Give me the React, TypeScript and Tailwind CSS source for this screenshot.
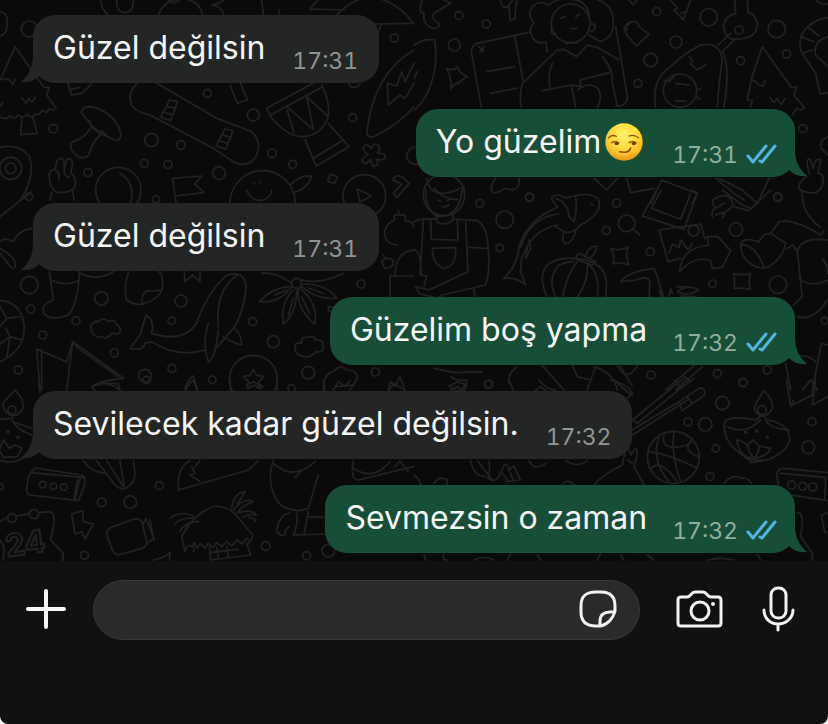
type Section = {
  x: number;
  y: number;
  circles: number[][];
  lines: string[];
};

type Message = {
  text: string;
  time: string;
  sent?: boolean;
  smirk?: boolean;
};

const messages: Message[] = [
  { text: "Güzel değilsin", time: "17:31" },
  { text: "Yo güzelim", time: "17:31", sent: true, smirk: true },
  { text: "Güzel değilsin", time: "17:31" },
  { text: "Güzelim boş yapma", time: "17:32", sent: true },
  { text: "Sevilecek kadar güzel değilsin.", time: "17:32" },
  { text: "Sevmezsin o zaman", time: "17:32", sent: true },
];

// Wallpaper doodles, drawn on a grid three times finer than the page
const sections: Section[] = [
  {
    x: 0,
    y: 0,
    circles: [
      [88, 87, 24], [1183, 114, 12], [160, 386, 13], [454, 420, 20], [543, 435, 13], [433, 490, 12],
      [504, 493, 12], [657, 519, 19], [264, 517, 12], [622, 280, 12], [760, 345, 18], [1058, 353, 12],
      [816, 460, 13], [878, 493, 12], [32, 505, 33], [32, 505, 16], [1247, 467, 26], [355, 570, 68],
      [788, 610, 98], [1093, 588, 64], [87, 590, 11], [468, 598, 11],
    ],
    lines: [
      "M302 0Q305 30 325 46M350 0Q348 38 375 38Q402 36 400 0M475 46Q490 0 545 -5Q600 0 608 46M505 0L520 10L540 0",
      "M635 15Q665 10 680 -8M635 15Q670 20 670 46M785 0L790 46M836 30L838 46M930 27L1035 30M930 27L960 -8M1010 46Q1050 0 1110 -10Q1190 0 1240 70L1120 72M1145 72L1132 100",
      "M0 35Q25 40 22 70Q20 105 0 108",
      "M45 140L2 238L26 238L38 254L46 238M45 140L105 225L132 262L148 262L140 285L168 325Q155 335 148 325Q140 345 128 330Q115 350 105 342Q95 360 82 342Q70 360 55 345Q45 362 30 347Q20 362 0 350",
      "M66 352L62 404L112 400L98 350M65 293L78 310L86 295L96 306L106 292M0 320L8 308",
      "M0 442Q60 430 88 470Q108 525 62 600",
      "M245 340Q240 320 275 320Q350 340 363 405Q358 430 340 418Q290 400 262 360ZM268 362Q272 385 285 388L298 400L306 392L325 412M270 385Q255 415 218 425Q200 445 235 470Q265 480 270 455Q280 420 302 405",
      "M203 250L215 285L245 280L275 252M207 270L238 262",
      "M410 252Q380 280 395 315Q405 335 450 345L640 445L700 485Q740 505 765 475Q790 430 755 395L650 355L470 250",
      "M508 300L532 305L526 325L500 318ZM500 320L490 335L518 345L526 325M490 335L482 352L512 362L518 345M674 387L698 392L692 412L666 405ZM666 405L656 422L684 430L692 412M656 422L648 438L678 448L684 430",
      "M800 325L940 250M812 345L965 262M800 325L812 350Q860 410 910 410Q965 405 985 350Q990 300 965 255M862 332L882 398M862 322L940 388M940 388L920 290L985 350",
      "M915 418L948 498L1047 440L985 370M940 475L1030 420M690 255L712 310L742 300L722 250",
      "M1242 150Q1120 220 1100 400Q1110 420 1130 405Q1200 370 1242 320M1165 315L1162 250L1190 258L1205 215L1215 245L1242 190M1165 315L1200 285L1215 295L1242 250M1045 250Q1060 275 1080 252",
      "M1090 440Q1100 428 1115 445Q1118 428 1135 435Q1145 445 1132 460Q1160 458 1155 475Q1145 482 1130 478Q1140 498 1122 500Q1112 490 1112 478Q1095 500 1086 482Q1090 470 1104 464Q1088 455 1090 440Z",
      "M148 530Q145 510 165 508L172 482Q185 465 192 485L193 505L200 480Q215 470 218 490L212 520Q230 530 225 560Q215 578 180 578Q150 575 148 530M155 578L150 600M218 572L222 600M166 510Q182 518 176 540M193 505Q190 530 208 532",
      "M360 520Q408 550 392 610M518 535L605 528L585 552L612 578L525 588M518 535L528 610",
      "M740 570Q750 600 782 602Q812 595 815 570M762 548L763 552M781 545L782 549M870 555Q910 520 935 530Q920 570 880 578",
      "M1072 568L1115 588L1080 606ZM990 522L1012 530L1005 550L983 545ZM1178 540Q1185 522 1205 530L1228 550L1190 592L1180 580L1205 552Z",
    ],
  },
  {
    x: 414,
    y: 0,
    circles: [
      [121, 135, 18], [217, 72, 12], [135, 47, 12], [728, 35, 12], [884, 52, 26], [786, 126, 18],
      [710, 180, 20], [672, 250, 12], [980, 182, 12], [1088, 87, 26], [1118, 162, 12], [1167, 386, 12],
      [798, 272, 50], [975, 90, 12], [470, 70, 58], [90, 585, 62], [346, 592, 12], [1092, 592, 12],
    ],
    lines: [
      "M0 135Q30 115 62 120Q75 200 40 280Q20 315 0 332M0 235L10 215",
      "M25 0Q10 40 30 40Q25 75 55 85Q80 85 75 70Q50 60 60 40L110 10L90 0M260 0Q262 25 280 22L300 -5M285 20L288 60L302 58L308 0",
      "M98 205Q120 215 130 200Q135 218 160 230Q140 240 132 252Q125 245 110 266Q115 240 98 205Z",
      "M202 322L172 155Q172 135 190 130L345 97M302 108L328 245M218 215L302 200M230 280L312 264M195 140L208 155M210 140L198 156",
      "M400 155L395 125Q365 135 355 110Q340 85 360 70Q335 40 360 15Q380 0 405 15Q430 -8 470 -2Q520 0 525 45M530 70Q555 75 535 95L525 90M412 85Q408 105 425 102",
      "M550 0Q600 15 598 70Q600 110 560 125L525 105M605 80L640 290Q640 320 605 318",
      "M430 150L325 250Q315 290 322 322M430 150L450 148L488 170L520 135L550 142L615 180M565 170Q600 210 595 250L610 318M415 190Q400 225 408 262M385 272L472 255L485 322M472 255L500 260L498 240L585 218M490 270Q530 240 555 270Q565 300 550 322",
      "M440 55L452 50M485 50L498 42M470 85Q480 90 488 82M455 130L490 128",
      "M630 85L655 65Q670 62 675 80L705 102L668 138L640 108ZM640 90Q630 70 652 65M645 0L658 15L668 0",
      "M770 0L790 25L780 30L808 60L830 0M800 40L815 35",
      "M962 0L965 40Q935 45 928 80Q935 120 965 118Q1030 118 1030 70Q1020 35 1003 40L1000 0M912 135L950 100M930 150L965 115",
      "M725 322Q710 240 770 200Q810 160 860 135Q920 125 925 180Q915 240 910 322M925 150Q950 200 930 322M750 240L765 245L785 225M825 170L835 180L830 192L850 210L875 195M850 270L862 265M845 290L858 298M785 250L825 255M785 302L815 304",
      "M1045 140L1012 238Q1025 242 1030 250L1046 260L1054 240M1012 238L1000 300L1015 302L1008 322M1045 140L1105 225L1132 262L1148 262L1140 285L1172 325Q1155 335 1148 325L1135 345M1068 292L1080 308L1090 295L1102 315L1112 295",
      "M1242 52Q1190 60 1165 100Q1150 140 1165 160L1205 220L1218 282L1242 278M1165 160L1195 150M1160 110L1200 125M1180 80L1215 108M1242 110Q1195 125 1205 165L1242 200M1205 0Q1220 15 1242 12",
      "M1178 530Q1150 550 1155 565Q1165 580 1205 578Q1235 560 1225 525L1212 520L1220 480Q1205 470 1198 505L1190 480Q1178 470 1180 495L1185 520M1240 410Q1215 420 1222 445L1242 465",
      "M245 535Q225 560 235 578Q250 580 275 565Q320 580 315 535M540 535L578 570L610 535M638 535L650 578L720 565M712 610L742 540L848 580L835 610M905 535L960 580L990 600M915 535L985 570L1030 610L1065 535M38 535Q50 610 150 560",
    ],
  },
  {
    x: 0,
    y: 190,
    circles: [
      [88, 285, 26], [304, 325, 20], [543, 333, 18], [92, 357, 12], [228, 392, 12], [128, 435, 12],
      [343, 489, 12], [515, 392, 11], [758, 395, 12], [820, 455, 18], [516, 535, 12], [435, 557, 19],
      [637, 569, 11], [55, 540, 12], [1083, 282, 12], [925, 548, 19], [760, 568, 72], [890, 280, 15],
      [1126, 546, 12], [875, 595, 11],
    ],
    lines: [
      "M95 5L0 80M0 155Q15 140 40 155Q55 120 95 115M0 175Q60 210 42 235M0 190L35 235",
      "M0 332Q60 335 72 400Q80 480 0 515M0 350L20 385L0 410M20 385L58 380M18 415L30 440L0 462M30 440L65 450M30 440L20 505",
      "M148 245L160 330Q120 345 132 370Q150 395 205 375Q235 340 238 245M155 270Q190 290 235 272M240 250Q290 275 340 245",
      "M385 248Q370 290 380 330Q400 345 425 343Q480 330 488 290Q490 260 478 245M425 343Q425 310 440 302Q465 305 480 300M553 245L555 275L578 255L600 275L600 245",
      "M272 410Q280 390 295 395Q310 380 325 395Q345 385 350 405Q370 415 355 432L335 430Q320 450 305 440Q275 445 272 410Z",
      "M885 475Q880 455 905 460Q900 440 925 442Q945 435 945 450Q970 445 970 470Q970 490 948 485Q930 505 910 500Q885 495 885 475Z",
      "M390 475L420 435L438 375Q465 390 455 430Q550 460 590 400Q620 310 680 255Q735 240 738 290Q735 350 705 410L645 478M390 475Q430 485 435 460L455 455Q530 505 615 480M625 400Q605 460 625 515Q645 510 655 420M655 410Q645 300 712 255M700 412Q725 430 725 465Q700 460 670 440",
      "M875 280Q830 245 785 250M875 290Q820 290 778 335Q840 340 875 290M880 300Q840 340 850 402Q890 370 890 300M895 298Q890 360 945 402Q955 340 900 295M905 290Q950 330 1010 325Q980 280 905 282M905 270Q960 285 1030 250M865 375L880 325M930 372L905 320M970 310L925 294M825 315L860 300",
      "M1170 320L1170 258L1240 258M1185 258Q1185 185 1242 180M1190 165Q1150 160 1155 120Q1165 95 1185 90Q1175 70 1200 75Q1220 70 1215 92Q1240 95 1242 110M1195 62L1198 75M1145 215Q1160 195 1180 212Q1182 235 1155 235ZM1150 195L1158 208M985 350L1002 352L1000 365L985 362Z",
      "M120 600L110 478L200 515L218 455L372 565Q300 570 275 590M110 478L125 480L125 600M218 455L200 600M218 455L235 475L355 560M275 590Q310 570 345 590L360 600M555 600Q560 570 580 558L592 600",
      "M760 538L770 556L792 560L776 575L782 596L762 586L742 596L745 574L730 560L750 556Z",
      "M970 600Q970 550 1000 545Q1020 520 1040 540Q1075 540 1070 570L1050 600M1000 600L1015 575L1035 590L1050 572M1165 600L1170 575L1185 590L1200 560L1212 590",
    ],
  },
  {
    x: 414,
    y: 190,
    circles: [
      [197, 40, 12], [347, 21, 12], [272, 89, 26], [257, 174, 11], [608, 39, 12], [577, 121, 12],
      [638, 100, 25], [709, 185, 12], [839, 122, 16], [966, 118, 20], [1091, 20, 12], [896, 281, 11],
      [1092, 284, 26], [711, 555, 12], [910, 551, 12], [223, 583, 12], [987, 577, 12], [1060, 540, 12], [1232, 392, 10],
    ],
    lines: [
      "M35 0Q35 60 70 80Q120 80 138 35L145 0M60 -5Q90 30 135 30M68 75L68 95Q90 110 115 92L118 75M72 30L82 35M100 32L110 27M85 50Q95 52 105 45",
      "M0 95Q10 85 68 87M118 87L190 92Q220 110 222 170Q230 240 215 285L85 315L75 322M28 90L18 255L38 258L30 290M50 92L52 148L132 150L130 90M155 95L162 245L45 300L5 290L15 310L60 322M55 175L125 173Q128 230 90 235Q55 225 55 175ZM165 172L220 175M0 178Q20 185 22 250M180 295L182 322",
      "M268 265Q310 230 315 170Q340 90 430 52L412 25Q425 5 455 25Q530 0 555 30Q565 70 500 105L485 120Q480 155 455 162Q440 150 450 125M435 72Q350 80 320 170M430 105Q350 120 322 210L320 245L335 285Q310 260 268 265M425 110L450 125Q470 135 500 105M345 150L350 175L335 205L340 170M425 25Q460 35 465 80L480 95Q490 60 485 20M530 40L536 45",
      "M400 322Q370 260 400 225Q430 200 480 205Q560 210 575 260Q580 290 575 322M425 322Q400 270 430 230Q450 215 480 215M445 322Q460 250 490 215M520 225Q525 270 490 322M520 220Q560 250 550 322M485 200L495 190L545 215L535 225L490 210ZM515 200Q520 170 548 168Q550 185 530 202",
      "M655 115L678 135M590 175Q615 185 642 172Q632 195 645 225Q615 215 598 222Q603 195 590 175ZM958 250Q985 258 1010 250Q1003 275 1008 298Q985 292 960 296Q965 270 958 250Z",
      "M728 0L685 78L810 118L850 10L835 0M742 0L712 55L800 88L830 10M735 120L860 102L872 145M735 120L762 215L800 205M765 190L775 162L795 172L800 150L822 180L835 160",
      "M797 245Q800 175 885 165L878 140L912 140L950 182L925 232L895 235L890 212Q840 195 797 245Z",
      "M895 80Q890 60 905 55Q885 30 910 22Q935 10 950 25L960 50L1005 62L1070 0M925 0L985 45L1010 55M905 55L930 40M905 75L935 65L925 85M935 65L955 50",
      "M980 165Q985 145 1010 150L1035 155Q1045 130 1070 130L1115 160Q1110 200 1065 230Q1040 240 1015 225Q980 205 980 165ZM980 165Q1020 160 1050 230M1070 130L1095 95Q1140 85 1220 135L1230 122M1165 0Q1160 70 1220 112M1120 175L1138 165L1150 185",
      "M1242 150Q1160 140 1150 185L1165 320L1138 345M1155 265Q1190 295 1242 270M1225 205Q1242 230 1240 250M1150 380Q1200 395 1240 330",
      "M620 275Q640 245 720 235L725 245L748 320M705 320L708 275Q700 255 665 270L620 275M735 300L745 322M765 320L770 295L775 310M790 305Q820 280 855 300Q820 320 790 305M790 290L830 292M800 318L845 320",
      "M60 535L120 548L205 545M110 560Q130 575 160 570L145 600L130 590L110 600M285 580Q280 550 310 530M385 527L450 600M475 527L490 560L530 570L545 530M530 570L520 600M540 530Q600 550 610 600M610 527Q640 580 670 527M620 530L655 590M755 600L840 527M785 600L865 530M810 560L830 575M1115 520L1130 600M1195 600L1222 460L1242 465M1140 500Q1180 490 1205 515M1165 600L1190 570L1210 600",
    ],
  },
  {
    x: 0,
    y: 380,
    circles: [
      [478, 317, 12], [305, 367, 13], [391, 366, 19], [253, 526, 12], [797, 498, 13], [920, 527, 12],
      [128, 314, 10], [160, 319, 10], [191, 321, 10], [36, 90, 12], [985, 512, 19], [54, 172, 3], [24, 155, 3], [0, 320, 10],
      [36, 414, 13], [102, 402, 14], [440, 0, 11],
    ],
    lines: [
      "M18 95Q0 75 18 58L45 30Q75 60 68 85Q60 105 36 108ZM36 108L38 125L95 145M0 118L30 115M38 125Q55 150 95 165M0 205L10 180L28 205L45 195L65 205L52 230L10 232L0 215M0 240Q40 255 72 232",
      "M115 0L120 38M275 20Q310 5 355 12L360 35M275 20L290 38M555 38Q560 15 580 0L595 38M690 0L692 38M740 15L760 5L790 20M830 0L832 38M970 0L975 36M1010 20L1060 15M1165 36L1180 10L1215 30",
      "M92 278L250 292Q258 300 252 320L235 362L88 345Q78 340 80 325L85 290ZM92 278L105 264L245 285L255 292M240 295L225 360M232 300L222 355",
      "M250 242Q270 275 315 280M290 242L345 315Q365 335 385 320Q405 305 405 280L400 242M320 242L370 320M360 242L372 318",
      "M0 425L20 412M50 408L88 400M118 398L150 395Q165 400 162 430L152 480L190 520L188 542M0 480L12 500L10 540",
      "M215 402L248 392L250 425L280 432L255 478L245 455L225 462ZM320 465Q318 450 335 442L400 418Q425 412 428 435L440 485Q442 500 425 505L355 525Q340 522 335 505ZM428 435L438 415L462 475L440 490M450 420L462 480",
      "M535 330Q530 260 570 242M575 260L585 280L570 285L600 305M535 330L745 270L775 242M600 242L585 260",
      "M555 515L545 470Q580 400 645 378Q690 380 712 410L758 465Q755 485 745 490M555 515Q560 490 575 500L582 488L592 505L600 490L615 505L625 490L640 502L650 488L665 500L680 485L695 498L712 480L725 492L740 475L750 485",
      "M510 415Q540 390 580 408M525 432Q545 410 585 415M540 455Q555 425 595 425M695 385Q700 340 735 335Q725 355 712 370M700 390Q730 350 760 365Q730 375 715 395M712 400Q750 385 770 405Q745 400 728 412M745 412Q770 415 765 425",
      "M628 500L632 540L752 525L740 490M650 502L655 536M680 498L685 532M628 518L715 508M460 540Q490 535 510 518L508 540M580 500L582 515",
      "M820 242Q800 300 825 350Q840 390 900 392L925 385L955 285M820 250Q880 305 945 245M885 292L905 272M870 400Q840 400 830 450Q835 470 855 465Q855 445 868 440M890 400Q895 430 880 465L975 462M925 395L912 462M925 410L975 412M1060 242Q1050 300 1075 300L1240 260M1060 265Q1120 305 1170 245M1185 260L1200 242L1225 275",
    ],
  },
  {
    x: 414,
    y: 380,
    circles: [
      [925, 69, 20], [874, 133, 20], [822, 126, 12], [905, 205, 11], [1194, 125, 12], [1183, 202, 19],
      [888, 290, 12], [778, 232, 78], [1133, 315, 12], [1166, 319, 12], [1196, 321, 12], [1044, 90, 13], [987, 9, 12],
      [225, 12, 12], [995, 157, 3], [1028, 153, 3], [1060, 172, 3],
    ],
    lines: [
      "M105 18L130 5L158 15L150 35L125 32ZM285 0L300 35M360 35L380 20L400 35M375 0Q400 30 425 30M600 0L655 48M590 0Q640 10 655 40L640 55",
      "M655 120L790 10L800 25L670 130ZM790 10L810 -5M800 25L840 -5M655 165L820 60M645 155L795 65M795 65L855 25Q875 20 872 45L805 92ZM820 50L835 72M780 0L790 12",
      "M1022 78L1048 32Q1080 60 1075 85Q1065 108 1044 108Q1020 100 1022 78ZM1040 108L1025 120Q950 105 932 125Q925 160 950 195Q1000 250 1060 240Q1120 215 1128 180Q1125 130 1060 120L1048 108M940 140Q980 160 1015 140L1040 120M1055 122Q1070 145 1125 150",
      "M968 180Q980 180 1000 195L1018 180L1035 198L1070 205Q1060 230 1020 235Q975 230 968 180ZM1000 195Q1005 220 1020 235M1035 198Q1035 220 1020 235M1010 248L1060 240M975 215Q1000 240 1015 245",
      "M1118 0L1130 78L1195 45L1200 0M1195 75L1205 0M1195 75L1242 50M1130 78L1140 60",
      "M750 165Q740 200 780 202Q830 200 835 175M702 215Q760 220 850 265M735 172Q710 240 765 305M780 155Q770 220 800 305M835 180Q800 210 855 230M710 265Q740 235 790 305",
      "M1088 285Q1090 265 1110 265L1242 278M1088 285L1098 340L1242 362M1100 280L1235 292M1235 292L1232 355",
      "M540 318Q555 290 625 255L635 205Q645 200 650 225L665 205Q675 215 665 240L660 260L692 318M640 240L655 250M170 242Q180 290 215 290M190 242L235 300M225 242Q230 260 222 295Q240 310 255 290L270 255Q280 250 285 270L300 258L310 280L320 300L275 305M265 280L280 300M285 270L298 302M345 242Q360 275 395 250M455 242Q490 265 520 242",
      "M0 285Q20 300 20 318M60 310Q75 285 100 300L98 318M445 318Q455 290 485 318M930 310Q955 280 980 295Q1000 290 1012 310M1150 398Q1165 395 1165 430L1160 470L1195 520L1195 540M1222 405L1242 398M1222 405L1232 455L1242 458",
      "M30 525L35 540M90 522Q80 540 100 540M180 540Q210 525 240 540M290 522L280 540M370 525L380 540M550 540L560 522M620 525L630 540M700 525L720 540M880 540Q920 530 960 540M1030 522L1040 540",
    ],
  },
];

const Wallpaper = () => {
  return (
    <svg className="absolute inset-0 h-full w-full" aria-hidden="true">
      <defs>
        <pattern id="doodles" width="828" height="561" patternUnits="userSpaceOnUse">
          {sections.map((s) => (
            <g
              key={`${s.x}-${s.y}`}
              transform={`translate(${s.x} ${s.y}) scale(0.33333)`}
              fill="none"
              stroke="#212121"
              strokeWidth="5"
              strokeLinecap="round"
              strokeLinejoin="round"
            >
              {s.circles.map(([cx, cy, r]) => (
                <circle key={`${cx}-${cy}-${r}`} cx={cx} cy={cy} r={r} />
              ))}
              {s.lines.map((d) => (
                <path key={d} d={d} />
              ))}
            </g>
          ))}
          <text x="7" y="557" fontSize="31" fontWeight="700" fill="none" stroke="#212121" strokeWidth="2" transform="rotate(-8 7 557)">
            24
          </text>
        </pattern>
      </defs>
      <rect width="100%" height="100%" fill="url(#doodles)" />
    </svg>
  );
};

const Smirk = () => {
  return (
    <svg viewBox="0 0 120 120" className="ml-1 mr-1 h-[38px] w-[38px]" role="img" aria-label="😏">
      <defs>
        <radialGradient id="face" cx="50%" cy="32%" r="68%">
          <stop offset="0" stopColor="#fff36b" />
          <stop offset="0.5" stopColor="#ffdc3d" />
          <stop offset="0.8" stopColor="#fcbb25" />
          <stop offset="1" stopColor="#ec8f10" />
        </radialGradient>
      </defs>
      <circle cx="60" cy="60" r="59" fill="url(#face)" />
      <g fill="none" stroke="#8a4f0a" strokeLinecap="round">
        <path d="M11 47Q20 35 36 42M76 41Q92 35 106 47" strokeWidth="4" />
        <path d="M21 62Q32 55 44 63M76 62Q87 55 98 62" strokeWidth="4" />
        <path d="M46 91Q77 97 81 79" strokeWidth="5" />
      </g>
      <ellipse cx="37" cy="65" rx="7" ry="5" fill="#6b3b05" />
      <ellipse cx="91" cy="65" rx="7" ry="5" fill="#6b3b05" />
    </svg>
  );
};

const ReadTicks = () => {
  return (
    <svg
      viewBox="0 0 32 22"
      className="ml-2 h-[22px] w-8"
      fill="none"
      stroke="#53b4e0"
      strokeWidth="3"
      strokeLinecap="round"
      strokeLinejoin="round"
      role="img"
      aria-label="Okundu"
    >
      <path d="M2 12L7 18L20 2M14 17L16 18L29 2" />
    </svg>
  );
};

const Bubble = ({ message }: { message: Message }) => {
  const { text, time, sent, smirk } = message;

  return (
    <li
      className={
        sent
          ? "relative flex h-[68px] self-end rounded-[22px] bg-[#174e38] pl-5 pr-[17px]"
          : "relative flex h-[68px] self-start rounded-[22px] bg-[#242626] pl-5 pr-[21px]"
      }
    >
      <svg
        viewBox="0 0 24 28"
        className={
          sent
            ? "absolute -right-3 bottom-0 h-7 w-6 fill-[#174e38]"
            : "absolute -left-3 bottom-0 h-7 w-6 -scale-x-100 fill-[#242626]"
        }
        aria-hidden="true"
      >
        <path d="M0 0H12C12 12 16 20 24 27C16 28 10 25 6 21L0 18Z" />
      </svg>
      <p className="relative flex items-center pb-0.5 text-[32px] leading-10 text-[#f4f6f5]">
        {text}
        {smirk && <Smirk />}
      </p>
      <div
        className={
          sent
            ? "relative ml-[25px] flex items-center self-end pb-2 text-[#8fae9f]"
            : "relative ml-[27px] flex items-center self-end pb-2 text-[#929494]"
        }
      >
        <time className="text-[23px] leading-7 tabular-nums">{time}</time>
        {sent && <ReadTicks />}
      </div>
    </li>
  );
};

export default function App() {
  return (
    <div className="flex min-h-screen flex-col overflow-hidden rounded-b-lg bg-[#111111] font-['Inter','Noto_Sans',sans-serif]">
      <main className="relative bg-[#0a0a0a] pb-2 pl-[33px] pr-[33px] pt-[15px]">
        <Wallpaper />
        <ul className="relative flex flex-col gap-[26px]">
          {messages.map((message, i) => (
            <Bubble key={i} message={message} />
          ))}
        </ul>
      </main>

      <footer className="flex items-center pl-[26px] pr-8 pt-[19px]">
        <button type="button" aria-label="Ekle" className="text-[#f7f7f7]">
          <svg viewBox="0 0 42 42" className="h-[42px] w-[42px]" stroke="currentColor" strokeWidth="4" strokeLinecap="round">
            <path d="M20 2V38M2 20H38" />
          </svg>
        </button>

        <div className="ml-[25px] flex h-[60px] flex-1 items-center rounded-full border border-[#383838] bg-[#2a2a2a] pl-6 pr-5">
          <input type="text" aria-label="Mesaj" className="min-w-0 flex-1 bg-transparent text-2xl text-white outline-none" />
          <button type="button" aria-label="Çıkartma" className="text-[#f2f2f2]">
            <svg viewBox="0 0 40 40" className="h-10 w-10" fill="none" stroke="currentColor" strokeWidth="3" strokeLinejoin="round">
              <path d="M21 36H17C7 36 2 31 2 22V16C2 6 7 2 17 2H22C32 2 36 7 36 16V21C34 29 28 35 21 36ZM21 36V31C21 25 25 22 31 22Q34 22 36 21" />
            </svg>
          </button>
        </div>

        <button type="button" aria-label="Kamera" className="ml-9 text-[#f2f2f2]">
          <svg viewBox="0 0 48 40" className="h-10 w-12" fill="none" stroke="currentColor" strokeWidth="3" strokeLinejoin="round">
            <path d="M5 7H11C15 7 15 2 19 2H27C31 2 31 7 35 7H42Q45 7 45 10V33Q45 36 42 36H5Q2 36 2 33V10Q2 7 5 7Z" />
            <circle cx="24" cy="21" r="9" />
            <circle cx="37" cy="14" r="2" fill="currentColor" stroke="none" />
          </svg>
        </button>

        <button type="button" aria-label="Sesli mesaj" className="ml-[38px] text-[#f2f2f2]">
          <svg viewBox="0 0 34 48" className="h-12 w-[34px]" fill="none" stroke="currentColor" strokeWidth="3" strokeLinecap="round">
            <rect x="9" y="2" width="15" height="30" rx="7" />
            <path d="M2 24C2 33 9 38 16 38S31 33 31 24M16 38V44" />
          </svg>
        </button>
      </footer>
    </div>
  );
}
